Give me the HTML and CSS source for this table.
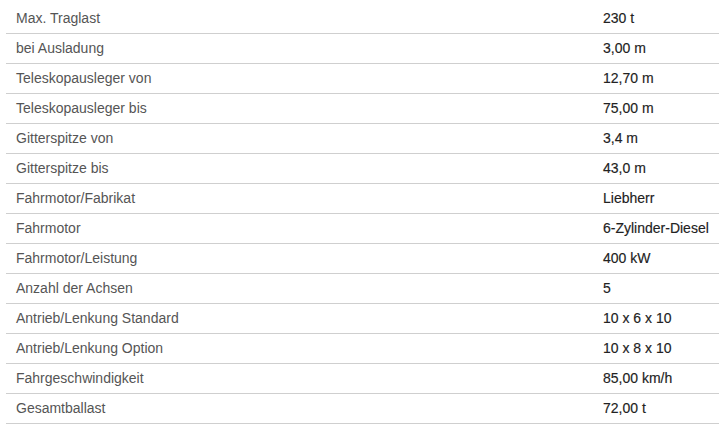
FILE: index.html
```html
<!DOCTYPE html>
<html lang="de">
<head>
<meta charset="utf-8">
<title>Technische Daten</title>
<link rel="stylesheet" href="styles.css">
</head>
<body>
<div class="specs">
  <div class="row"><div class="label">Max. Traglast</div><div class="value">230 t</div></div>
  <div class="row"><div class="label">bei Ausladung</div><div class="value">3,00 m</div></div>
  <div class="row"><div class="label">Teleskopausleger von</div><div class="value">12,70 m</div></div>
  <div class="row"><div class="label">Teleskopausleger bis</div><div class="value">75,00 m</div></div>
  <div class="row"><div class="label">Gitterspitze von</div><div class="value">3,4 m</div></div>
  <div class="row"><div class="label">Gitterspitze bis</div><div class="value">43,0 m</div></div>
  <div class="row"><div class="label">Fahrmotor/Fabrikat</div><div class="value">Liebherr</div></div>
  <div class="row"><div class="label">Fahrmotor</div><div class="value">6-Zylinder-Diesel</div></div>
  <div class="row"><div class="label">Fahrmotor/Leistung</div><div class="value">400 kW</div></div>
  <div class="row"><div class="label">Anzahl der Achsen</div><div class="value">5</div></div>
  <div class="row"><div class="label">Antrieb/Lenkung Standard</div><div class="value">10 x 6 x 10</div></div>
  <div class="row"><div class="label">Antrieb/Lenkung Option</div><div class="value">10 x 8 x 10</div></div>
  <div class="row"><div class="label">Fahrgeschwindigkeit</div><div class="value">85,00 km/h</div></div>
  <div class="row"><div class="label">Gesamtballast</div><div class="value">72,00 t</div></div>
</div>
</body>
</html>
```

FILE: styles.css
```css
html, body {
  margin: 0;
  padding: 0;
  background: #ffffff;
}

body {
  font-family: "Liberation Sans", Arial, Helvetica, sans-serif;
  font-size: 14px;
}

.specs {
  margin: 0 0 0 6px;
  padding-top: 4px;
  display: flex;
  flex-direction: column;
}

.row {
  display: grid;
  grid-template-columns: 597px 1fr;
  height: 29px;
  border-bottom: 1px solid #cfcfcf;
  align-items: center;
}

.label {
  padding-left: 10px;
  color: #555555;
  line-height: 16px;
  padding-bottom: 2px;
}

.value {
  color: #222222;
  line-height: 16px;
  padding-bottom: 2px;
  white-space: nowrap;
  -webkit-text-stroke: 0.15px #222222;
}
```
